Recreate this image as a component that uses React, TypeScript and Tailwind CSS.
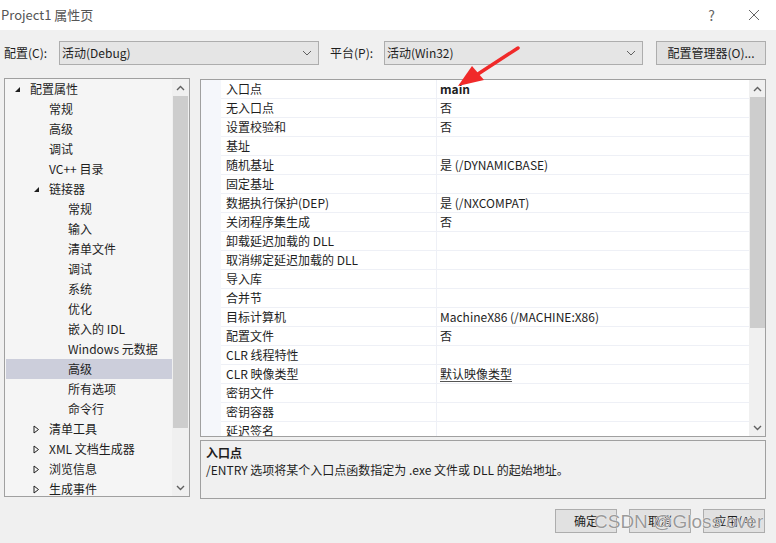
import React from "react"

const font = { fontFamily: '"Noto Sans CJK SC", "Noto Sans", sans-serif' }

type TreeItem = { label: string; level: number; toggle?: "open" | "closed"; selected?: boolean }

const tree: TreeItem[] = [
  { label: "配置属性", level: 0, toggle: "open" },
  { label: "常规", level: 1 },
  { label: "高级", level: 1 },
  { label: "调试", level: 1 },
  { label: "VC++ 目录", level: 1 },
  { label: "链接器", level: 1, toggle: "open" },
  { label: "常规", level: 2 },
  { label: "输入", level: 2 },
  { label: "清单文件", level: 2 },
  { label: "调试", level: 2 },
  { label: "系统", level: 2 },
  { label: "优化", level: 2 },
  { label: "嵌入的 IDL", level: 2 },
  { label: "Windows 元数据", level: 2 },
  { label: "高级", level: 2, selected: true },
  { label: "所有选项", level: 2 },
  { label: "命令行", level: 2 },
  { label: "清单工具", level: 1, toggle: "closed" },
  { label: "XML 文档生成器", level: 1, toggle: "closed" },
  { label: "浏览信息", level: 1, toggle: "closed" },
  { label: "生成事件", level: 1, toggle: "closed" },
]

const props: [string, string, string?][] = [
  ["入口点", "main", "bold"],
  ["无入口点", "否"],
  ["设置校验和", "否"],
  ["基址", ""],
  ["随机基址", "是 (/DYNAMICBASE)"],
  ["固定基址", ""],
  ["数据执行保护(DEP)", "是 (/NXCOMPAT)"],
  ["关闭程序集生成", "否"],
  ["卸载延迟加载的 DLL", ""],
  ["取消绑定延迟加载的 DLL", ""],
  ["导入库", ""],
  ["合并节", ""],
  ["目标计算机", "MachineX86 (/MACHINE:X86)"],
  ["配置文件", "否"],
  ["CLR 线程特性", ""],
  ["CLR 映像类型", "默认映像类型", "underline"],
  ["密钥文件", ""],
  ["密钥容器", ""],
  ["延迟签名", ""],
]

function Chevron({ up }: { up?: boolean }) {
  return (
    <svg width="9" height="6" viewBox="0 0 9 6" className="text-[#606060]">
      <path d={up ? "M1 5 L4.5 1.5 L8 5" : "M1 1 L4.5 4.5 L8 1"} fill="none" stroke="currentColor" strokeWidth="1.4" />
    </svg>
  )
}

function DropChevron() {
  return (
    <svg width="10" height="6" viewBox="0 0 10 6">
      <path d="M1 1 L5 5 L9 1" fill="none" stroke="#606060" strokeWidth="1" />
    </svg>
  )
}

function Toggle({ kind }: { kind: "open" | "closed" }) {
  if (kind === "open")
    return (
      <svg width="7" height="7" viewBox="0 0 7 7">
        <path d="M6 1 L6 6 L1 6 Z" fill="#1e1e1e" />
      </svg>
    )
  return (
    <svg width="7" height="9" viewBox="0 0 7 9">
      <path d="M1 1 L5.5 4.5 L1 8 Z" fill="none" stroke="#1e1e1e" strokeWidth="1" />
    </svg>
  )
}

function Select({ value, width }: { value: string; width: string }) {
  return (
    <div className={`flex h-[24px] ${width} items-center justify-between border border-[#adadad] bg-[#e5e5e5] pl-[2px] pr-[6px]`}>
      <span>{value}</span>
      <DropChevron />
    </div>
  )
}

function Button({ label, width }: { label: string; width: string }) {
  return (
    <div className={`flex h-[24px] ${width} items-center justify-center border border-[#adadad] bg-[#e1e1e1]`}>{label}</div>
  )
}

export default function App() {
  return (
    <div style={font} className="relative h-[543px] w-[776px] overflow-hidden bg-[#f0f0f0] text-[12px] text-[#1e1e1e]">
      {/* title bar */}
      <div className="flex h-[30px] items-center justify-between bg-white pl-[1px] pr-[16px] text-[13px] text-[#555]">
        <span>Project1 属性页</span>
        <div className="flex items-center gap-[33px] text-[#666]">
          <span className="text-[14px]">?</span>
          <svg width="12" height="12" viewBox="0 0 12 12">
            <path d="M1 1 L11 11 M11 1 L1 11" stroke="#666" strokeWidth="1" />
          </svg>
        </div>
      </div>

      {/* toolbar */}
      <div className="flex items-center pl-[4px] pt-[11px]">
        <span className="w-[55px]">配置(C):</span>
        <Select value="活动(Debug)" width="w-[260px]" />
        <span className="ml-[11px] w-[54px]">平台(P):</span>
        <Select value="活动(Win32)" width="w-[259px]" />
        <div className="ml-[13px] flex h-[24px] w-[110px] items-center justify-center border border-[#adadad] bg-[#e1e1e1]">
          配置管理器(O)...
        </div>
      </div>

      {/* main area */}
      <div className="mt-[13px] flex pl-[4px]">
        {/* tree */}
        <div className="flex h-[419px] w-[186px] border border-[#a0a0a0] bg-[#f5f5f5]">
          <div className="flex-1 overflow-hidden pl-[1px]">
            {tree.map((t, i) => (
              <div
                key={i}
                className={`flex h-[20px] items-center ${t.selected ? "bg-[#cccedb]" : ""}`}
                style={{ paddingLeft: 8 + t.level * 19 }}
              >
                <span className="flex w-[16px] items-center justify-start">
                  {t.toggle && <Toggle kind={t.toggle} />}
                </span>
                <span>{t.label}</span>
              </div>
            ))}
          </div>
          <div className="flex w-[17px] flex-col items-center bg-[#f0f0f0]">
            <div className="flex h-[17px] items-center">
              <Chevron up />
            </div>
            <div className="h-[332px] w-[15px] bg-[#cdcdcd]" />
            <div className="flex-1" />
            <div className="flex h-[17px] items-center">
              <Chevron />
            </div>
          </div>
        </div>

        {/* right column */}
        <div className="ml-[10px] flex w-[566px] flex-col">
          <div className="mt-[1px] flex h-[358px] border border-[#a0a0a0] bg-white">
            <div className="flex-1 overflow-hidden">
              {props.map(([name, value, style], i) => (
                <div key={i} className="flex h-[19px]">
                  <div className="w-[20px] bg-[#f5f7fb]" />
                  <div className="flex w-[215px] items-center border-b border-[#eef0f6] pl-[5px]">{name}</div>
                  <div className="w-px bg-[#eef0f6]" />
                  <div
                    className={`flex flex-1 items-center border-b border-[#eef0f6] pl-[3px] ${style === "bold" ? "font-bold" : ""}`}
                  >
                    <span className={style === "underline" ? "underline decoration-[#555] underline-offset-2" : ""}>{value}</span>
                  </div>
                </div>
              ))}
            </div>
            <div className="flex w-[16px] flex-col items-center bg-[#f0f0f0]">
              <div className="flex h-[17px] items-center">
                <Chevron up />
              </div>
              <div className="h-[231px] w-[15px] bg-[#cdcdcd]" />
              <div className="flex-1" />
              <div className="flex h-[17px] items-center">
                <Chevron />
              </div>
            </div>
          </div>

          <div className="mt-[3px] h-[59px] border border-[#a0a0a0] bg-[#f0f0f0] px-[5px] pt-[3px]">
            <div className="font-bold leading-[17px]">入口点</div>
            <div className="leading-[17px]">/ENTRY 选项将某个入口点函数指定为 .exe 文件或 DLL 的起始地址。</div>
          </div>
        </div>
      </div>

      {/* buttons */}
      <div className="mt-[10px] flex justify-end gap-[12px] pr-[11px]">
        <Button label="确定" width="w-[62px]" />
        <Button label="取消" width="w-[62px]" />
        <Button label="应用(A)" width="w-[62px]" />
      </div>

      {/* watermark */}
      <div
        className="absolute left-[594px] top-[510px] z-10 whitespace-nowrap text-[19px] leading-[24px] text-[#9a9a9a]"
        style={{ fontFamily: '"Liberation Sans", sans-serif', textShadow: "0 0 1px #fff, 0 0 1px #fff" }}
      >
        CSDN @Gloss over
      </div>

      {/* red arrow annotation */}
      <svg className="absolute left-0 top-0" width="776" height="543" viewBox="0 0 776 543">
        <path d="M518 48 L478 74" stroke="#f02a2a" strokeWidth="3.5" strokeLinecap="round" />
        <path d="M458 86 L472 66 L484 80 Z" fill="#f02a2a" />
      </svg>
    </div>
  )
}
